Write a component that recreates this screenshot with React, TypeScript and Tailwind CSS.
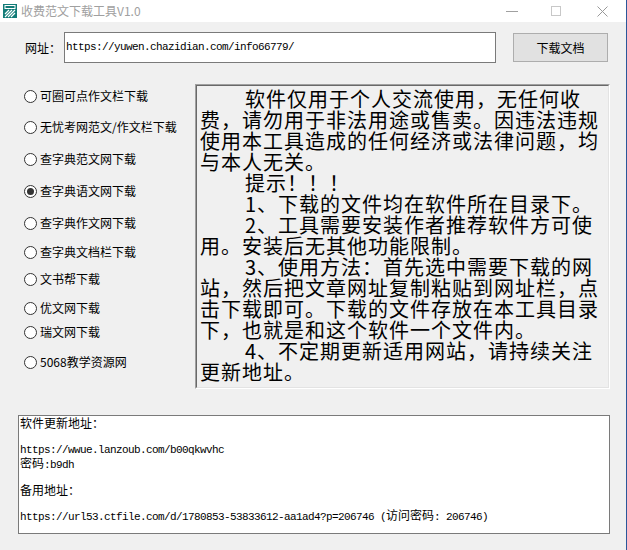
const cjk = "font-['Noto_Sans_CJK_SC','Noto_Sans',sans-serif]";

const sites = [
  { label: "可圈可点作文栏下载", gap: "mt-[5px]" },
  { label: "无忧考网范文/作文栏下载", gap: "mt-[17px]" },
  { label: "查字典范文网下载", gap: "mt-[18px]" },
  { label: "查字典语文网下载", gap: "mt-[18px]", checked: true },
  { label: "查字典作文网下载", gap: "mt-[18px]" },
  { label: "查字典文档栏下载", gap: "mt-[15px]" },
  { label: "文书帮下载", gap: "mt-[13px]" },
  { label: "优文网下载", gap: "mt-[15px]" },
  { label: "瑞文网下载", gap: "mt-[10px]" },
  { label: "5068教学资源网", gap: "mt-[16px]" },
];

const notice = [
  { text: "软件仅用于个人交流使用，无任何收", indent: true },
  { text: "费，请勿用于非法用途或售卖。因违法违规" },
  { text: "使用本工具造成的任何经济或法律问题，均" },
  { text: "与本人无关。" },
  { text: "提示！！！", indent: true },
  { text: "1、下载的文件均在软件所在目录下。", indent: true },
  { text: "2、工具需要安装作者推荐软件方可使", indent: true },
  { text: "用。安装后无其他功能限制。" },
  { text: "3、使用方法：首先选中需要下载的网", indent: true },
  { text: "站，然后把文章网址复制粘贴到网址栏，点" },
  { text: "击下载即可。下载的文件存放在本工具目录" },
  { text: "下，也就是和这个软件一个文件内。" },
  { text: "4、不定期更新适用网站，请持续关注", indent: true },
  { text: "更新地址。" },
];

const Mono = ({ children }: { children: React.ReactNode }) => (
  <span className="font-['Liberation_Mono',monospace] text-[11px] tracking-[-0.6px]">{children}</span>
);

const AppIcon = () => (
  <svg width="14" height="14" viewBox="0 0 14 14">
    <rect x="0" y="0" width="14" height="14" fill="#137c78" />
    <rect x="2" y="1.5" width="10" height="3" fill="none" stroke="#fff" strokeWidth="1" />
    <path d="M2 10 L6 6 M2 13 L9 6 M5 13 L12 6 M8 13 L12 9" stroke="#fff" strokeWidth="1.2" />
  </svg>
);

const Radio = ({ checked }: { checked?: boolean }) => (
  <span className="w-[13px] h-[13px] rounded-full border border-[#333] bg-white flex items-center justify-center shrink-0">
    {checked && <span className="w-[7px] h-[7px] rounded-full bg-[#333]" />}
  </span>
);

export default function App() {
  return (
    <div className={`w-[627px] h-[550px] bg-[#f0f0f0] border-r border-[#2b579a] flex flex-col text-black ${cjk}`}>
      {/* title bar */}
      <div className="h-[22px] bg-white flex items-center shrink-0">
        <div className="ml-[3px]">
          <AppIcon />
        </div>
        <span className="ml-[4px] text-[12px] text-[#a0a0a0] leading-none">收费范文下载工具V1.0</span>
        <div className="ml-auto flex items-center h-full">
          <span className="w-[12px] h-px bg-[#a0a0a0] mr-[33px]" />
          <span className="w-[10px] h-[10px] border border-[#c8c8c8] mr-[36px]" />
          <svg width="11" height="11" viewBox="0 0 11 11" className="mr-[18px]">
            <path d="M0.5 0.5 L10.5 10.5 M10.5 0.5 L0.5 10.5" stroke="#999" strokeWidth="1" />
          </svg>
        </div>
      </div>

      {/* url row */}
      <div className="mt-[10px] h-[31px] flex items-center pl-[25px] shrink-0">
        <span className="w-[39px] text-[12px]">网址：</span>
        <div className="w-[432px] h-[31px] bg-white border border-[#7a7a7a] flex items-center pl-[1px]">
          <Mono>https://yuwen.chazidian.com/info66779/</Mono>
        </div>
        <button className="ml-[17px] w-[95px] h-[29px] bg-[#e1e1e1] border border-[#adadad] text-[12px]">
          下载文档
        </button>
      </div>

      {/* middle */}
      <div className="mt-[21px] h-[305px] flex shrink-0">
        <div className="w-[195px] shrink-0 pl-[24px] flex flex-col">
          {sites.map((s) => (
            <label key={s.label} className={`${s.gap} h-[14px] flex items-center gap-[3px] text-[12px] leading-none whitespace-nowrap`}>
              <Radio checked={s.checked} />
              <span>{s.label}</span>
            </label>
          ))}
        </div>
        <div className="w-[415px] h-[305px] border border-t-[#a0a0a0] border-l-[#a0a0a0] border-r-white border-b-white">
          <div className="w-full h-full border border-t-[#696969] border-l-[#696969] border-r-[#e3e3e3] border-b-[#e3e3e3] pl-[3px] pt-[2px]">
            <p className="text-[20px] tracking-[1px] leading-[21px] whitespace-nowrap">
              {notice.map((l, i) => (
                <span key={i}>
                  {l.indent && <span className="inline-block w-[45px]" />}
                  {l.text}
                  <br />
                </span>
              ))}
            </p>
          </div>
        </div>
      </div>

      {/* update info */}
      <div className="mt-[26px] ml-[18px] w-[592px] h-[119px] bg-white border border-[#7a7a7a] pl-[1px] pt-[1px] text-[12px] leading-[12.5px] shrink-0">
        <div>软件更新地址：</div>
        <div className="h-[12.5px]" />
        <div>
          <Mono>https://wwue.lanzoub.com/b00qkwvhc</Mono>
        </div>
        <div>
          密码<Mono>:b9dh</Mono>
        </div>
        <div className="h-[12.5px]" />
        <div>备用地址：</div>
        <div className="h-[12.5px]" />
        <div className="whitespace-nowrap">
          <Mono>https://url53.ctfile.com/d/1780853-53833612-aa1ad4?p=206746 (</Mono>
          访问密码<Mono>: 206746)</Mono>
        </div>
      </div>
    </div>
  );
}
